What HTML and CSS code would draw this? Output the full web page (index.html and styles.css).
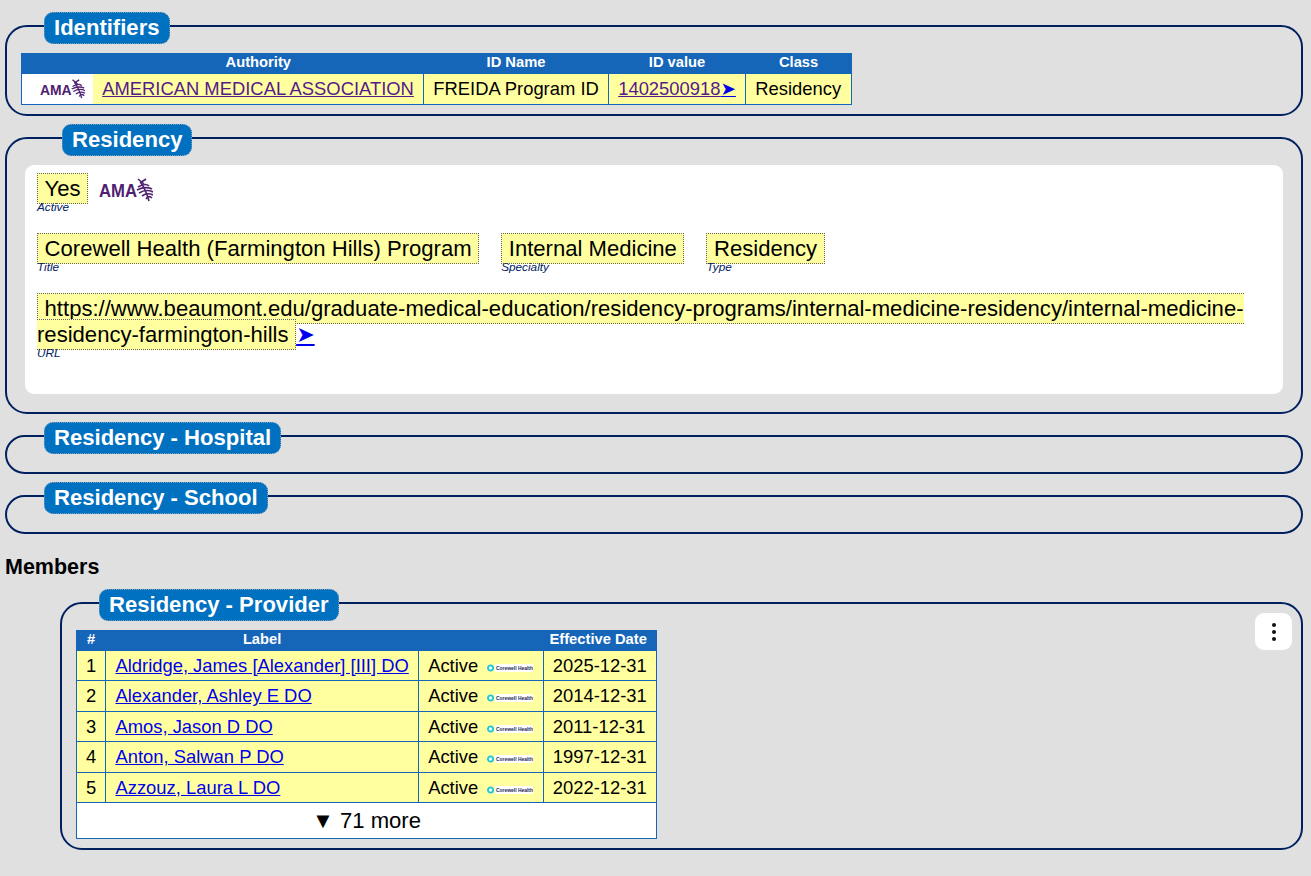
FILE: index.html
```html
<!doctype html>
<html>
<head>
<meta charset="utf-8">
<title>Residency</title>
<link rel="stylesheet" href="styles.css">
</head>

<body>

<svg class="defs">
	<symbol id="ama" viewBox="0 0 54 24">
		<text x="0" y="19" class="ama_txt" textLength="38" lengthAdjust="spacingAndGlyphs">AMA</text>
		<path d="M39 1 L45 6 M41 5 L47 1" class="ama_snake" />
		<path d="M39 9 C44 6 48 6 50 8 M38 12 C44 9 49 9 53 11 M40 15 C45 12 50 12 54 14 M43 18 C47 15 50 15 54 17 M47 21 C49 18 51 18 53 20" class="ama_snake" />
		<path d="M42 5 C45 9 48 16 50 23" class="ama_snake" />
	</symbol>
	<symbol id="corewell" viewBox="0 0 46 10">
		<rect x="8" y="1" width="38" height="8" fill="#fff" />
		<circle cx="3.5" cy="5" r="2.6" class="cw_ring" />
		<text x="9" y="7" class="cw_txt" textLength="37" lengthAdjust="spacingAndGlyphs">Corewell Health</text>
	</symbol>
</svg>

<fieldset class="box">
	<legend>Identifiers</legend>
	<table class="tbl tbl_id">
		<tr><th></th><th>Authority</th><th>ID Name</th><th>ID value</th><th>Class</th></tr>
		<tr>
			<td class="logo_cell"><svg class="ama_sm"><use href="#ama" /></svg></td>
			<td class="no_left"><a href="#" class="seen">AMERICAN MEDICAL ASSOCIATION</a></td>
			<td>FREIDA Program ID</td>
			<td><a href="#" class="seen">1402500918</a><a href="#" class="go">➤</a></td>
			<td class="last">Residency</td>
		</tr>
	</table>
</fieldset>

<fieldset class="box">
	<legend class="lg_wide">Residency</legend>
	<div class="panel">
		<div class="f_row">
			<div class="field"><div class="val">Yes</div><div class="cap">Active</div></div>
			<svg class="ama_lg"><use href="#ama" /></svg>
		</div>
		<div class="f_row">
			<div class="field"><div class="val">Corewell Health (Farmington Hills) Program</div><div class="cap">Title</div></div>
			<div class="field"><div class="val">Internal Medicine</div><div class="cap">Specialty</div></div>
			<div class="field"><div class="val">Residency</div><div class="cap">Type</div></div>
		</div>
		<div class="url_row">
			<span class="url_val">https://www.beaumont.edu/graduate-medical-education/residency-programs/internal-medicine-residency/internal-medicine-residency-farmington-hills</span><a href="#" class="go">➤</a>
			<div class="cap">URL</div>
		</div>
	</div>
</fieldset>

<fieldset class="box">
	<legend>Residency - Hospital</legend>
</fieldset>

<fieldset class="box">
	<legend>Residency - School</legend>
</fieldset>

<h3 class="members">Members</h3>

<fieldset class="box sub">
	<legend>Residency - Provider</legend>
	<div class="menu_btn"><i></i><i></i><i></i></div>
	<table class="tbl">
		<tr><th>#</th><th>Label</th><th></th><th class="eff">Effective Date</th></tr>
		<tr><td>1</td><td><a href="#">Aldridge, James [Alexander] [III] DO</a></td><td>Active <svg class="cw"><use href="#corewell" /></svg></td><td>2025-12-31</td></tr>
		<tr><td>2</td><td><a href="#">Alexander, Ashley E DO</a></td><td>Active <svg class="cw"><use href="#corewell" /></svg></td><td>2014-12-31</td></tr>
		<tr><td>3</td><td><a href="#">Amos, Jason D DO</a></td><td>Active <svg class="cw"><use href="#corewell" /></svg></td><td>2011-12-31</td></tr>
		<tr><td>4</td><td><a href="#">Anton, Salwan P DO</a></td><td>Active <svg class="cw"><use href="#corewell" /></svg></td><td>1997-12-31</td></tr>
		<tr><td>5</td><td><a href="#">Azzouz, Laura L DO</a></td><td>Active <svg class="cw"><use href="#corewell" /></svg></td><td>2022-12-31</td></tr>
		<tr><td colspan="4" class="more">▼ 71 more</td></tr>
	</table>
</fieldset>

</body>
</html>
```

FILE: styles.css
```css
*{box-sizing:border-box;}
html{background:#e0e0e0;}
body{margin:10px 8px 0 5px; font-family:"Liberation Sans",Arial,sans-serif; font-size:18.4px; color:#000;}
.defs{width:0;height:0;position:absolute;}

/* group boxes */
.box{margin:0 0 6px 0; padding:11px 14px 9px 14px; min-width:0; border:2px solid #002060; border-radius:22px; position:relative;}
.box legend{position:relative; top:2px; margin-left:23px; padding:0 9px; height:32px; line-height:29px; font-size:22.08px; font-weight:bold; color:#fff; background:#0070c0; border:1px dotted #7f9fb8; border-radius:9px;}
.box legend.lg_wide{margin-left:41px;}
.box.sub{margin-left:55px;}

.members{margin:0; padding:15px 0 7px 0; font-size:21.5px; line-height:25px; font-weight:bold;}

/* tables */
.tbl{border-collapse:collapse; font-size:18.4px;}
.tbl th{background:#1565b9; color:#fff; font-size:14.72px; line-height:17px; padding:0 9.2px 2px 9.2px; font-weight:bold; text-align:center; border:1px solid #1565b9;}
.tbl th.eff{padding:0 8.2px 2px 5px;}
.tbl td{background:#ffffa0; border:1px solid #1565b9; padding:5px 9.2px; line-height:19.4px; white-space:nowrap;}
.tbl td:first-child{text-align:center; padding:5px 9px;}
.tbl_id td{line-height:20px;}
.tbl td.logo_cell{background:#fff; border-right:0; padding:0 8px 0 18px; width:71px;}
.tbl td.no_left{border-left:0;}
.tbl td.last{padding-right:10px;}
.tbl td.more{background:#fff; text-align:center; font-size:22.08px; line-height:25px;}
.tbl td.logo_cell svg{display:block;}

a{color:#0000ee;}
a.seen{color:#551a8b;}
a.go{color:#0000ee; font-family:"DejaVu Sans",sans-serif;}

/* logos */
.ama_sm{width:45px;height:20px;}
.ama_lg{width:54px;height:24px;margin-top:5px;}
.cw{width:46px;height:10px;margin-left:4px;vertical-align:-1px;}
.ama_txt{font:bold 18.5px "Liberation Sans",sans-serif; fill:#4f2170;}
.ama_snake{fill:none; stroke:#4f2170; stroke-width:1.6;}
.cw_ring{fill:#dff; stroke:#25c4d8; stroke-width:1.8;}
.cw_txt{font:bold 5px "Liberation Sans",sans-serif; fill:#1a2a5a;}

/* residency panel */
.panel{margin:0 4px 9px 4px; padding:8px 12px 37px 12px; background:#fff; border-radius:9px;}
.f_row{display:flex; gap:22px; margin-bottom:22px;}
.f_row:first-child{gap:11px;}
.val{background:#ffffa0; border:1px dotted #666; padding:2px 6.6px; font-size:22.08px; line-height:25px;}
.cap{font-size:11.78px; line-height:9px; font-style:italic; color:#002060; margin-top:-2px;}
.url_row{margin-top:25px; font-size:22.08px; line-height:26px;}
.url_val{background:#ffffa0; border:1px dotted #666; padding:2px 6.6px;}
.url_row .cap{margin-top:0;}

/* menu */
.menu_btn{position:absolute; top:-6px; right:9px; width:37px; height:37px; background:#fff; border-radius:9px; display:flex; flex-direction:column; align-items:center; justify-content:center; gap:3px;}
.menu_btn i{width:4px; height:4px; background:#111; border-radius:50%;}
```
